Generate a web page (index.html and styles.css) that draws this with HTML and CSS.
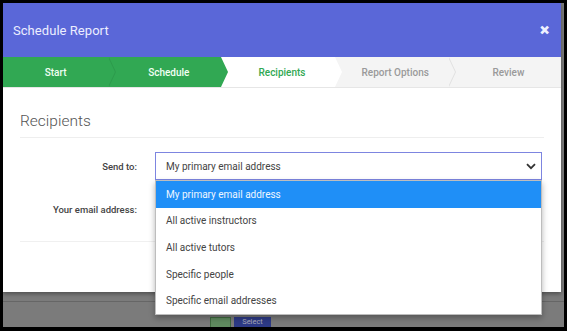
FILE: index.html
```html
<!DOCTYPE html>
<html>
<head>
<meta charset="utf-8">
<link rel="stylesheet" href="styles.css">
</head>
<body>
<div class="screen">
  <div class="modal">
    <div class="modal-header">
      <span class="modal-title">Schedule Report</span>
      <span class="close">&#x2715;</span>
    </div>
    <div class="steps">
      <div class="step done first">Start</div>
      <div class="step done">Schedule</div>
      <div class="step active">Recipients</div>
      <div class="step todo">Report Options</div>
      <div class="step todo last">Review</div>
    </div>
    <div class="modal-body">
      <h2 class="section-title">Recipients</h2>
      <div class="form-row">
        <label class="form-label">Send to:</label>
        <div class="select-wrap">
          <div class="select">
            <span>My primary email address</span>
            <svg class="caret" width="10" height="7" viewBox="0 0 10 7"><path d="M1 1.2 L5 5.2 L9 1.2" fill="none" stroke="#333" stroke-width="1.8"/></svg>
          </div>
          <ul class="dropdown">
            <li class="selected">My primary email address</li>
            <li>All active instructors</li>
            <li>All active tutors</li>
            <li>Specific people</li>
            <li>Specific email addresses</li>
          </ul>
        </div>
      </div>
      <div class="form-row">
        <label class="form-label">Your email address:</label>
        <div class="input-placeholder"></div>
      </div>
      <div class="modal-footer"></div>
    </div>
  </div>
  <div class="page-below">
    <div class="page-line"></div>
    <div class="page-buttons">
      <span class="btn-green"></span>
      <span class="btn-blue">Select</span>
    </div>
  </div>
</div>
</body>
</html>
```
FILE: styles.css
```css
html, body {
  margin: 0;
  padding: 0;
  background: #000;
}
body {
  width: 567px;
  height: 331px;
  overflow: hidden;
  font-family: Roboto, "Liberation Sans", sans-serif;
}
.screen {
  margin: 3px 3px 0 3px;
  width: 561px;
  height: 324px;
  background: #7b7b7b;
  overflow: hidden;
  position: relative;
}
.modal {
  width: 558px;
  height: 289px;
  background: #fff;
  box-shadow: 0 2px 4px rgba(0,0,0,0.35);
  position: relative;
  z-index: 2;
}
.modal-header {
  height: 54px;
  background: #5a67d8;
  display: flex;
  align-items: center;
  justify-content: space-between;
  padding: 0 12px 0 10px;
}
.modal-title {
  color: #eceeff;
  font-size: 13px;
  letter-spacing: 0.05px;
}
.close {
  color: #eef0ff;
  font-size: 11px;
  font-weight: 900;
  -webkit-text-stroke: 1px #eef0ff;
}
.steps {
  display: flex;
  height: 30px;
  border-bottom: 1px solid #e6e6e6;
  background: #f4f4f4;
}
.step {
  flex: 1;
  position: relative;
  display: flex;
  align-items: center;
  justify-content: center;
  font-size: 10px;
  font-weight: 500;
  padding-left: 8px;
}
.step.first {
  padding-left: 0;
}
.step.done {
  background: #31a853;
  color: #f2fff4;
}
.step.active {
  background: #fff;
  color: #31a853;
}
.step.todo {
  background: #f4f4f4;
  color: #9a9a9a;
}
.step::before,
.step::after {
  content: "";
  position: absolute;
  top: 0;
  width: 0;
  height: 0;
  border-top: 15px solid transparent;
  border-bottom: 15px solid transparent;
}
.step::before {
  right: -8px;
  border-left: 7px solid rgba(0,0,0,0.08);
  z-index: 1;
}
.step::after {
  right: -7px;
  z-index: 2;
}
.step.done::after { border-left: 7px solid #31a853; }
.step.active::after { border-left: 7px solid #fff; }
.step.todo::after { border-left: 7px solid #f4f4f4; }
.step.done:nth-child(2)::before { display: none; }
.step.active::before { display: none; }
.step.last::before,
.step.last::after { display: none; }

.modal-body {
  padding: 0 17px;
}
.section-title {
  margin: 0;
  padding-top: 22px;
  padding-bottom: 5px;
  line-height: 22px;
  font-size: 15.5px;
  font-weight: 300;
  color: #555;
  border-bottom: 1px solid #eeeeee;
}
.form-row {
  display: flex;
  align-items: center;
  margin-top: 14px;
}
.form-row + .form-row {
  margin-top: 15px;
}
.form-label {
  width: 117px;
  text-align: right;
  padding-right: 18px;
  font-size: 9.5px;
  font-weight: 500;
  color: #444;
}
.select-wrap {
  position: relative;
  width: 387px;
}
.select {
  height: 26px;
  border: 1px solid #7d85e0;
  display: flex;
  align-items: center;
  justify-content: space-between;
  padding: 0 5px 0 10px;
  font-size: 10px;
  color: #444;
  background: #fff;
}
.caret {
  display: block;
}
.input-placeholder {
  width: 387px;
  height: 28px;
}
.dropdown {
  position: absolute;
  left: 0;
  top: 28px;
  width: 385px;
  margin: 0;
  padding: 0;
  list-style: none;
  background: #fff;
  border: 1px solid #bdbdbd;
  box-shadow: 0 3px 6px rgba(0,0,0,0.3);
  z-index: 5;
}
.dropdown li {
  height: 26.6px;
  display: flex;
  align-items: center;
  padding-left: 10px;
  font-size: 10px;
  color: #444;
}
.dropdown li.selected {
  background: #1f8ff7;
  color: #eef6ff;
}
.modal-footer {
  margin-top: 18px;
  border-top: 1px solid #f0f0f0;
}
.page-below {
  height: 35px;
}
.page-line {
  margin-top: 9px;
  height: 1px;
  background: #666;
}
.page-buttons {
  display: flex;
  gap: 3px;
  margin-top: 15px;
  padding-left: 207px;
}
.btn-green {
  width: 21px;
  height: 20px;
  background: #5f8a5f;
  border: 1px solid #3f6a3f;
  box-sizing: border-box;
}
.btn-blue {
  width: 37px;
  height: 20px;
  background: #2d3a86;
  color: #aab;
  font-size: 7.5px;
  text-align: center;
  line-height: 9px;
}
```
